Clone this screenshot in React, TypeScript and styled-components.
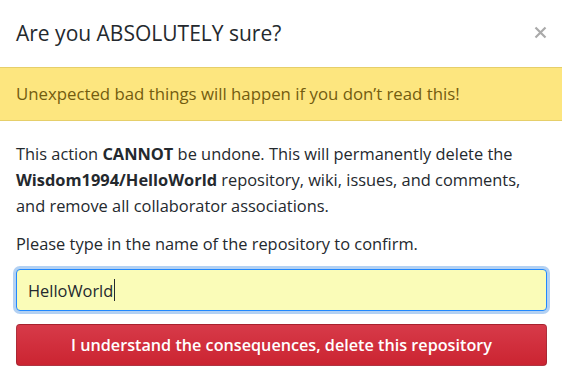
import React from 'react';
import styled, { createGlobalStyle } from 'styled-components';

const GlobalStyle = createGlobalStyle`
  body {
    margin: 0;
    background: #fff;
    font-family: 'Open Sans', 'Noto Sans', sans-serif;
    color: #24292e;
  }
`;

const Dialog = styled.div`
  width: 562px;
  height: 378px;
  background: #fff;
  overflow: hidden;
`;

const Header = styled.div`
  height: 67px;
  display: flex;
  align-items: center;
  justify-content: space-between;
  padding: 0 15px 2px 16px;
  box-sizing: border-box;
`;

const Title = styled.h3`
  margin: 0;
  font-size: 21px;
  font-weight: 400;
  color: #24292e;
`;

const Close = styled.button`
  border: 0;
  background: none;
  padding: 0;
  display: flex;
  cursor: pointer;
`;

const Warning = styled.div`
  background: #fde67f;
  border-top: 1px solid #e6cf6a;
  border-bottom: 1px solid #e6cf6a;
  padding: 15px 16px;
  font-size: 16.8px;
  line-height: 22px;
  color: #735c0f;
`;

const Body = styled.div`
  padding: 20px 15px 0 16px;
`;

const Text = styled.p`
  margin: 0 0 12px;
  font-size: 16.4px;
  line-height: 26px;
  color: #24292e;
`;

const Field = styled.div`
  height: 42px;
  box-sizing: border-box;
  border: 1px solid #2188ff;
  border-radius: 4px;
  box-shadow: 0 0 0 3px rgba(3, 102, 214, 0.3);
  background: #fafcb8;
  display: flex;
  align-items: center;
  padding: 0 11px;
  font-size: 16.4px;
  color: #24292e;
`;

const Caret = styled.span`
  display: inline-block;
  width: 1px;
  height: 22px;
  background: #24292e;
  margin-left: 1px;
`;

const DangerButton = styled.button`
  display: block;
  width: 100%;
  height: 42px;
  margin-top: 13px;
  border: 1px solid rgba(27, 31, 35, 0.2);
  border-radius: 4px;
  background: linear-gradient(to bottom, #d73a49, #cb2431);
  color: #fff;
  font-family: 'Open Sans', 'Noto Sans', sans-serif;
  font-size: 16.2px;
  font-weight: 600;
  cursor: pointer;
`;

export default function App() {
  return (
    <Dialog>
      <GlobalStyle />
      <Header>
        <Title>Are you ABSOLUTELY sure?</Title>
        <Close aria-label="Close">
          <svg width="13" height="13" viewBox="0 0 13 13">
            <path d="M1.5 1.5 L11.5 11.5 M11.5 1.5 L1.5 11.5" stroke="#aaaaaa" strokeWidth="2.2" />
          </svg>
        </Close>
      </Header>
      <Warning>Unexpected bad things will happen if you don’t read this!</Warning>
      <Body>
        <Text>
          This action <b>CANNOT</b> be undone. This will permanently delete the{' '}
          <b>Wisdom1994/HelloWorld</b> repository, wiki, issues, and comments,<br />
          and remove all collaborator associations.
        </Text>
        <Text>Please type in the name of the repository to confirm.</Text>
        <Field>
          HelloWorld
          <Caret />
        </Field>
        <DangerButton>I understand the consequences, delete this repository</DangerButton>
      </Body>
    </Dialog>
  );
}
